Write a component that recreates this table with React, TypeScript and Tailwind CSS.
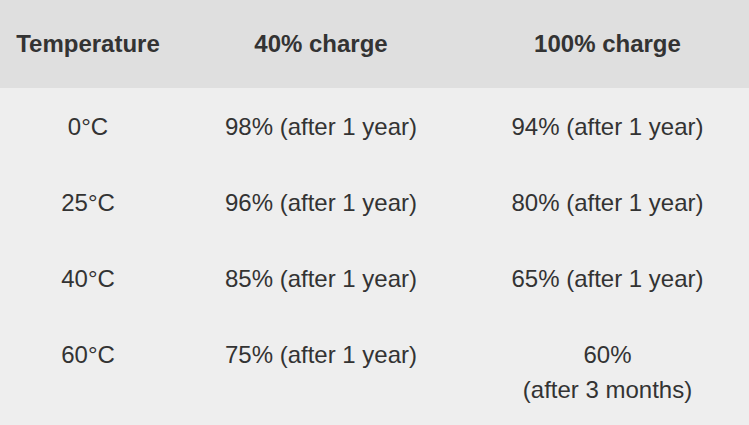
const rows: [string, string, string][] = [
  ["0°C", "98% (after 1 year)", "94% (after 1 year)"],
  ["25°C", "96% (after 1 year)", "80% (after 1 year)"],
  ["40°C", "85% (after 1 year)", "65% (after 1 year)"],
  ["60°C", "75% (after 1 year)", "60%\n(after 3 months)"],
];

export default function App() {
  return (
    <div
      className="w-[749px] h-[425px] overflow-hidden bg-[#eeeeee] text-[#333333] text-[24px] leading-[35px]"
      style={{ fontFamily: "'Liberation Sans', Arial, sans-serif" }}
    >
      <div className="grid grid-cols-[176px_290px_1fr] bg-[#dfdfdf] pt-[26px] pb-[27px] font-bold text-center">
        <div>Temperature</div>
        <div>40% charge</div>
        <div>100% charge</div>
      </div>
      {rows.map(([temp, forty, hundred]) => (
        <div key={temp} className="grid grid-cols-[176px_290px_1fr] pt-[21px] pb-[20px] text-center">
          <div>{temp}</div>
          <div>{forty}</div>
          <div className="whitespace-pre-line">{hundred}</div>
        </div>
      ))}
    </div>
  );
}
